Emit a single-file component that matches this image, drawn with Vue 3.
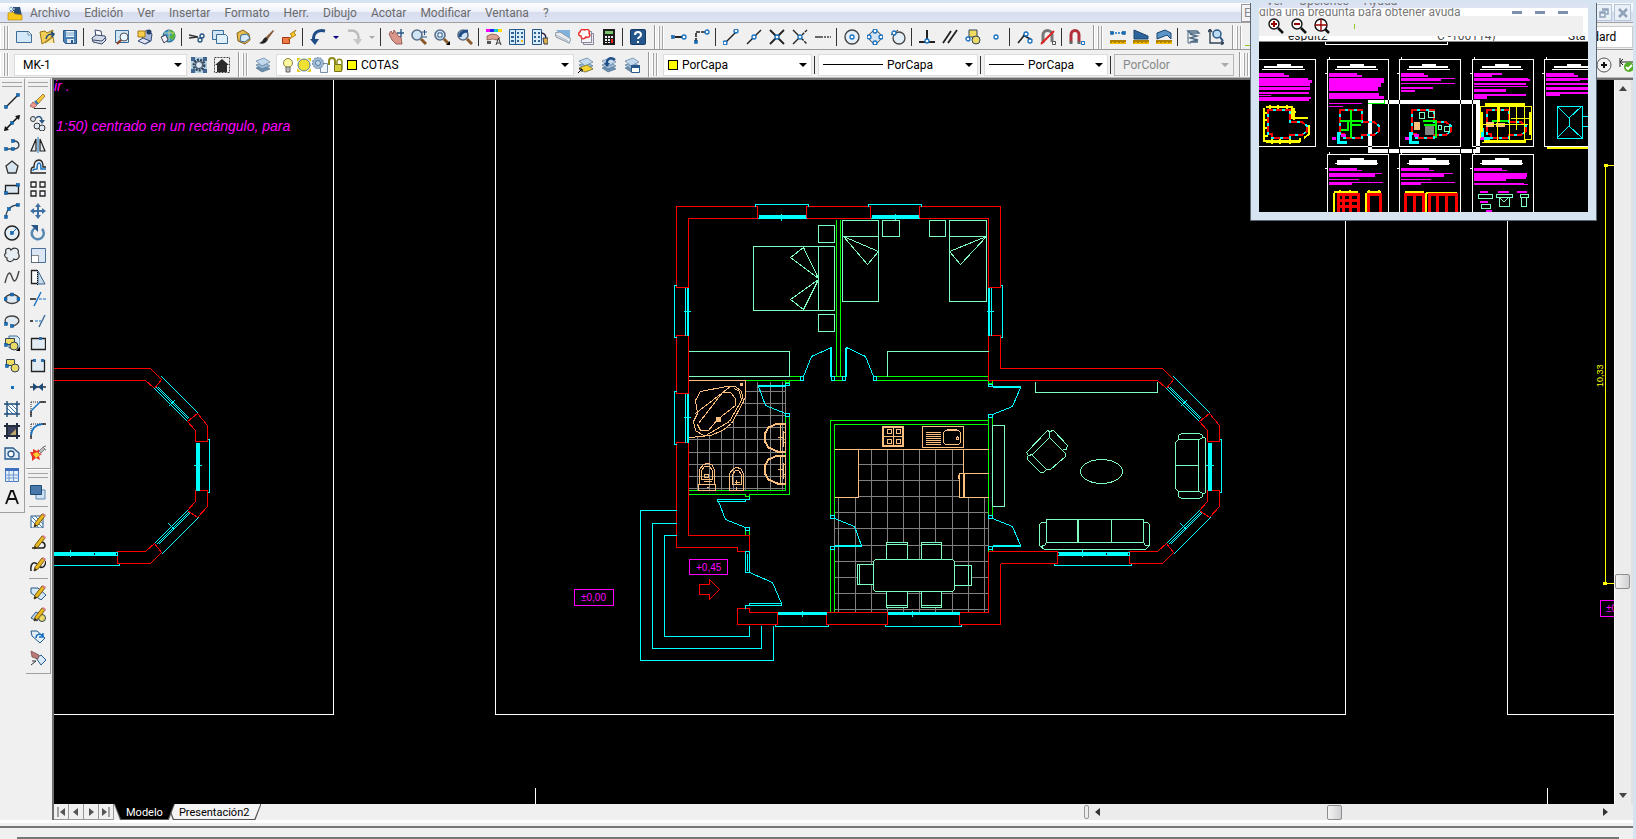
<script setup>
import { ref } from 'vue'

const menus = ['Archivo', 'Edición', 'Ver', 'Insertar', 'Formato', 'Herr.', 'Dibujo', 'Acotar', 'Modificar', 'Ventana', '?']

const pencil = '<path d="M5 11L12 2l3 2-7 9-4 2z" fill="#e8b820" stroke="#7a5a10"/><path d="M12 2l1-1 3 2-1 2z" fill="#d8808c"/><path d="M4 15l1-3 2 2z" fill="#222"/>'
const lens = '<circle cx="6" cy="6" r="5" fill="#cfe4f5" stroke="#5a6f85" stroke-width="1.6"/><path d="M10 10l5 5" stroke="#8a5a2a" stroke-width="3"/>'
const layers = '<path d="M1 11l8-3 6 4-8 3z" fill="#6d8fb0" stroke="#47698c" stroke-width=".6"/><path d="M1 8l8-3 6 4-8 3z" fill="#9cb9d6" stroke="#47698c" stroke-width=".6"/><path d="M1 4l8-3 6 4-8 4z" fill="#c3d9ee" stroke="#47698c" stroke-width=".6"/>'
const nd = (x, y) => `<rect x="${x - 1.5}" y="${y - 1.5}" width="3" height="3" fill="#1570c0" stroke="#0b4a86" stroke-width=".5"/>`
const ring = (x, y) => `<circle cx="${x}" cy="${y}" r="2" fill="#fff" stroke="#1570c0" stroke-width="1.3"/>`
const ln = (d, c = '#222', w = 1.4, e = '') => `<path d="${d}" fill="none" stroke="${c}" stroke-width="${w}" ${e}/>`
const ruler = '<path d="M0 11h16v4H0z" fill="#f0b800"/><path d="M1 11v3M3 11v2M5 11v3M7 11v2M9 11v3M11 11v2M13 11v3M15 11v2" stroke="#6d4c00" fill="none"/>'

const icons = {
  new: '<path d="M.5 2.5h12l3 3v8H.5z" fill="#d3e8f8" stroke="#3d6c96"/><path d="M12 2l4 4h-4z" fill="#fff" stroke="#3d6c96" stroke-width=".7"/>',
  open: '<path d="M1 3l5-1 2 2 6-3-2 8-9 6z" fill="#f4cf58" stroke="#9a7413"/><path d="M6 14l8-6 1 6" fill="#fbe9a0" stroke="#9a7413"/><path d="M7 10C8 5 11 5 15 5M12 3l3 2-2 3" stroke="#244e78" fill="none" stroke-width="1.6"/>',
  save: '<path d="M1.500 1.500h13v13h-11l-2-2z" fill="#4a82b8" stroke="#2a5785"/><path d="M4 2h8v6H4z" fill="#e8f3fb"/><path d="M4 4h8M4 6h8" stroke="#7fa5c8"/><path d="M5 10h7v4H5z" fill="#dde7ef"/><path d="M9 11h2v3H9z" fill="#2a5785"/>',
  print: '<path d="M4 1l6 1 1 6-6 0z" fill="#fff" stroke="#3a4a6a"/><path d="M1 9l4-3 9 1 1 4-4 4-9-2z" fill="#d5dae8" stroke="#3a4a6a"/><path d="M2 11l9 1 4-4" fill="none" stroke="#3a4a6a"/>',
  preview: '<path d="M1.500 1.500h13v12h-13z" fill="#cfe6f7" stroke="#3d6c96"/><circle cx="10" cy="8" r="4" fill="#e8f6ff" stroke="#555"/><path d="M7 11l-4 4" stroke="#8a3a1a" stroke-width="2"/>',
  publish: '<path d="M4 5l6-4 5 4-1 7-6 3z" fill="#a9bad8" stroke="#334a78"/><path d="M1 2h7v6H1z" fill="#f7cf4a" stroke="#a77812"/><circle cx="12" cy="3" r="2.500" fill="#223f66"/><path d="M1 12l5-3 7 3-5 3z" fill="#dfe4f0" stroke="#334a78"/>',
  web: '<circle cx="9" cy="7" r="6" fill="#3d9ad8" stroke="#1a5a92"/><path d="M9 2c3 2 4 4 1 5s1 3 3 4c2-2 3-6 1-8s-4-2-5-1z" fill="#5bb43c"/><path d="M9 1v11M4 4h10" stroke="#fbe28a" stroke-width=".7"/><path d="M1 8l5-2 2 5-4 3z" fill="#f0f0f6" stroke="#445"/>',
  cut: '<path d="M0 6l9 2M0 9l9-1" stroke="#333" stroke-width="1.300"/><circle cx="11" cy="11" r="2" fill="none" stroke="#2a5785" stroke-width="1.400"/><circle cx="13" cy="7" r="2" fill="none" stroke="#2a5785" stroke-width="1.400"/>',
  copy: '<path d="M.5 1.500h11v9H.5z" fill="#cfe6f7" stroke="#3d6c96"/><path d="M4.500 5.500h9l2 2v7h-11z" fill="#dff0fb" stroke="#3d6c96"/>',
  paste: '<path d="M2 4l6-3 6 4 1 6-5 4-7-3z" fill="#e8bd4c" stroke="#85621a"/><path d="M6 6l6-1 3 4-5 4-5-1z" fill="#d5e9f8" stroke="#3d6c96"/>',
  brush: '<path d="M15 1l-7 7 2 2 6-8z" fill="#8a5a3a"/><path d="M8 8c-3 1-3 5-7 6 3 2 8 0 9-4z" fill="#2a2420"/>',
  block: '<path d="M1.500 8.500h7v6h-7z" fill="#ee7a48" stroke="#a33a14"/><path d="M15 1L9 5l2 2-4 4 8-5-2-2z" fill="#f8c820" stroke="#9a6a00" stroke-width=".7"/>',
  undo: '<path d="M15 2C7 0 2 5 4 12" fill="none" stroke="#1f4d86" stroke-width="3"/><path d="M0 10l9 0-4 6z" fill="#1f4d86"/>',
  redo: '<path d="M2 2c8-2 12 3 10 10" fill="none" stroke="#bcbcbc" stroke-width="2.500"/><path d="M7 10h9l-4 6z" fill="#c6c6c6"/>',
  pan: '<path d="M1 5l2-3 2 3 1-4 3 4 1 2 3 1 1 7-6 0-4-4z" fill="#d8978a" stroke="#8a4a42" stroke-width=".8"/><path d="M13 0v8M9 4h7" stroke="#2a5785" stroke-width="1.400"/>',
  zoomrt: lens + '<path d="M11 3h5M13.500 1v5M11 8h5" stroke="#2a5785" fill="none"/>',
  zoomwin: lens + '<path d="M4 4h4v4H4z" fill="#fff" stroke="#2a5785"/><path d="M16 12v4h-4z" fill="#000"/>',
  zoomprev: lens + '<path d="M3 8c0-4 3-6 8-6" stroke="#1f4d86" stroke-width="3" fill="none"/>',
  props: '<path d="M0 0h4v3H0z" fill="#f0f"/><path d="M4 0h4v3H4z" fill="#22f"/><path d="M8 0h4v3H8z" fill="#0cc"/><path d="M12 0h4v3h-4z" fill="#fd0"/><path d="M1 7l5-2 5 1 3 3-3 2-4-1-6 1z" fill="#dba494" stroke="#7a4438" stroke-width=".7"/><path d="M1 12h4v3H1z" fill="#555"/><path d="M10 16l2.500-7 2.500 7M11 14h3" fill="none" stroke="#333"/>',
  center: '<path d="M.5.5h15v15H.5z" fill="#d9ecfa" stroke="#26588a"/><path d="M6.500 1v14" stroke="#26588a"/><path d="M2 3h3v2H2zM2 7h3v2H2zM2 11h3v2H2zM8 3h2v2H8zM12 3h2v2h-2zM8 7h2v2H8zM12 7h2v2h-2zM8 11h2v2H8z" fill="#2e6296"/><path d="M12 11h2v2h-2z" fill="#f4b400"/>',
  palette: '<path d="M.5.5h9v15h-9z" fill="#d9ecfa" stroke="#26588a"/><path d="M2 3h2v2H2zM6 3h2v2H6zM2 7h2v2H2zM6 7h2v2H6zM2 11h2v2H2zM6 11h2v2H6z" fill="#2e6296"/><path d="M9 4c4 0 5 3 5 6" stroke="#224" fill="none" stroke-width="1.400"/><path d="M11 9h5v6h-4z" fill="#dfae48" stroke="#345"/>',
  sheets: '<path d="M1 1h14v14z" fill="#7fb2dc"/><path d="M0 4l5-1 11 7-2 4L1 8z" fill="#e8ecf0" stroke="#8b98a4"/><path d="M1 6l12 6" stroke="#a5b2bd"/>',
  markup: '<path d="M5.500 4.500h10v11h-10z" fill="#e8e8f0" stroke="#889"/><path d="M3.500 2.500h10v11h-10z" fill="#f4f4f8" stroke="#889"/><path d="M2 3c1-4 4-2 5-2 3-2 5 1 4 3 2 3 0 5-3 4-2 3-5 2-5-1-3 0-3-3-1-4z" fill="#fff" stroke="#e83030" stroke-width="1.500"/>',
  calc: '<path d="M2 0h12v16H2z" fill="#1c1c1c"/><path d="M4 2h8v3H4z" fill="#79c66a"/><path d="M4 7h2v2H4zM7 7h2v2H7zM10 7h2v2h-2zM4 10h2v2H4zM7 10h2v2H7zM4 13h2v1H4zM7 13h2v1H7z" fill="#eee"/><path d="M10 10h2v4h-2z" fill="#e22"/>',
  help: '<rect x=".5" y=".5" width="15" height="15" rx="1" fill="#24568c" stroke="#153a63"/><path d="M5 6c0-4 6-4 6 0 0 2-3 2-3 4" fill="none" stroke="#fff" stroke-width="2"/><path d="M7 12h2v2H7z" fill="#fff"/>',
  s1: nd(2, 8) + ln('M4 8h7', '#222', 2) + ring(13, 8),
  s2: ln('M2 13V3h9', '#222', 1.6, 'stroke-dasharray="4 1"') + nd(2, 13) + ring(13, 3),
  s3: ln('M3 13L13 3') + ring(2, 14) + ring(13, 2),
  s4: ln('M1 15L15 1') + ring(8, 8),
  s5: ln('M1 1l14 14M15 1L1 15', '#222', 1.8) + ring(8, 8),
  s6: ln('M1 1l7 7-7 7') + ln('M15 1L8 8l7 7', '#222', 1.4, 'stroke-dasharray="3 1"') + ring(8, 8),
  s7: ln('M0 8h6', '#444', 1.6) + ln('M6 8h10', '#444', 1.6, 'stroke-dasharray="2 1"'),
  s8: '<circle cx="8" cy="8" r="7" fill="#e2eef8" stroke="#444" stroke-width="1.400"/>' + ring(8, 8),
  s9: '<circle cx="8" cy="8" r="6" fill="#d3e3f1" stroke="#444"/>' + ring(8, 2) + ring(2, 8) + ring(14, 8) + ring(8, 14),
  s10: '<circle cx="9" cy="9" r="6" fill="#e2eef8" stroke="#444" stroke-width="1.300"/><path d="M1 6l7-5" stroke="#444"/>' + ring(4, 4),
  s11: ln('M8 1v11M0 13h16', '#222', 2) + ring(8, 12),
  s12: ln('M1 14L9 2M6 14L15 1', '#222', 1.8),
  s13: '<path d="M4 1h8v7H4z" fill="#f0dc60" stroke="#345"/><circle cx="11" cy="11" r="4" fill="#eada68" stroke="#345"/>' + ring(3, 10),
  s14: ring(8, 8),
  s15: ln('M1 14L10 3M6 6l9 5', '#222', 1.6) + ring(9, 5) + ring(13, 12),
  s16: '<path d="M3 14V6c0-6 9-6 9 0v7" fill="none" stroke="#777" stroke-width="3"/><path d="M1 15L14 2" stroke="#e02020" stroke-width="2"/><path d="M12.500 12.500h3v3h-3z" fill="#fff" stroke="#555"/>',
  s17: '<path d="M2 13V6c0-6 8-6 8 0v7" fill="none" stroke="#b2303c" stroke-width="3"/><path d="M.5 12h3v3h-3zM8.500 12h3v3h-3z" fill="#666"/><path d="M12.500 12.500h3v3h-3z" fill="#fff" stroke="#1570c0"/>',
  dist: ln('M2 4h12', '#1570c0', 1.4, 'stroke-dasharray="2 1"') + nd(2, 4) + nd(14, 4) + ruler,
  area: '<path d="M1 1l14 6v3H1z" fill="#2d659a" stroke="#1b466f"/>' + ruler,
  region: '<path d="M1 10V4l8-3 6 3v6l-4-4z" fill="#5c95c8" stroke="#1b466f"/>' + ruler,
  list: '<path d="M3 2h9l2 2H5zM5 5l7 2-7 2 8 2-8 2h8" fill="none" stroke="#4e6b85" stroke-width="1.400"/><path d="M3 2v12h3" stroke="#4e6b85" fill="none"/>',
  locate: ln('M2 1v13h13M0 3l2-3 2 3M13 12l3 2-3 2', '#345') + '<circle cx="9" cy="5" r="4" fill="#bcdcf5" stroke="#2a5785" stroke-width="1.500"/><path d="M12 8l3 4" stroke="#2a5785" stroke-width="2"/>',
  gear: '<path d="M0 0h16v16H0z" fill="#b9cfe2"/><path d="M0 0h4v4H0zM12 0h4v4h-4zM0 12h4v4H0zM12 12h4v4h-4z" fill="#3f6791"/><circle cx="8" cy="8" r="5" fill="none" stroke="#31475e" stroke-width="3" stroke-dasharray="2 1"/><circle cx="8" cy="8" r="3.500" fill="#dbe7f1" stroke="#31475e"/>',
  home: '<path d="M.5.5h15v15H.5z" fill="none" stroke="#444" stroke-dasharray="2 1"/><path d="M8 2L1 8h2v7h10V8h2z" fill="#2b2b2b"/>',
  layers,
  lay1: layers + '<path d="M1 11l8-3 6 4-8 3z" fill="#f5d431" stroke="#7a6a10" stroke-width=".6"/><path d="M0 16l4-4M1 12h3v3" stroke="#000" fill="none"/>',
  lay2: layers + '<path d="M14 3C9-1 5 3 6 7" stroke="#1f4d86" stroke-width="2.500" fill="none"/><path d="M3 6h6l-3 4z" fill="#1f4d86"/>',
  lay3: layers + '<path d="M7.500 8.500h8v7h-8z" fill="#fff" stroke="#26588a"/><path d="M7 8h9v3H7z" fill="#26588a"/>',
  bulb: '<circle cx="8" cy="6" r="4.500" fill="#fdf7a0" stroke="#8c8340"/><path d="M6 10h4v5H6z" fill="#bbb" stroke="#666"/>',
  sun: '<path d="M1 1h4L1 5zM15 1h-4l4 4zM1 15h4l-4-4zM15 15h-4l4-4z" fill="#e2cd28"/><circle cx="8" cy="8" r="6" fill="#f0e030" stroke="#5a7a9a"/>',
  sunvp: '<path d="M8.500 6.500h7v9h-7z" fill="#eef4fa" stroke="#7890a8"/><circle cx="6" cy="6" r="5.500" fill="#9fb9d2" stroke="#5a7fa5" stroke-dasharray="2 1"/><circle cx="6" cy="6" r="2.500" fill="#c5d8e8" stroke="#5a7fa5"/>',
  lock: '<path d="M1 8V4c0-4 6-4 6 0v3" fill="none" stroke="#8d8a1c" stroke-width="2"/><path d="M6.500 7.500h7v7h-7z" fill="#d4ce3a" stroke="#77741a"/><path d="M9 7V4c1-3 5-2 5 1v8" fill="none" stroke="#8d8a1c" stroke-width="1.500"/>',
  line: ln('M2 14L14 2') + nd(2, 14) + nd(14, 2),
  xline: ln('M1 15L15 1', '#111', 1.6) + '<path d="M0 16l1-5 4 4zM16 0l-1 5-4-4z" fill="#111"/>' + nd(8, 8),
  pline: ln('M2 12h8c7 0 6-8 0-8', '#345', 1.4) + nd(2, 12) + nd(9, 12) + nd(9, 4),
  polygon: '<path d="M8 2l6 5-2 7H4L2 7z" fill="#d7e5f0" stroke="#333" stroke-width="1.300"/>',
  rect: '<path d="M1.500 4.500h13v8h-13z" fill="#dbe7f1" stroke="#222" stroke-width="1.300"/>' + nd(14, 4) + nd(2, 12),
  arc: ln('M2 14C2 7 7 2 14 2', '#345') + nd(2, 14) + nd(5, 6) + nd(14, 2),
  circle: '<circle cx="8" cy="8" r="7" fill="#e2edf6" stroke="#222" stroke-width="1.500"/><path d="M8 8l5-5" stroke="#1570c0"/>' + nd(8, 8),
  cloud: '<path d="M2 6C0 1 6 0 7 3c3-4 9-1 7 3 3 4-1 8-4 6-2 4-8 3-7-1-3-1-3-4-1-5z" fill="#e6edf3" stroke="#333" stroke-width="1.200"/>',
  spline: ln('M1 14C4 2 6 2 8 8s4 6 7-6', '#444'),
  ellipse: '<ellipse cx="8" cy="8" rx="7" ry="4.500" fill="#dfe9f1" stroke="#444" stroke-width="1.400"/>' + nd(1.500, 8) + nd(14.500, 8) + nd(8, 3.500),
  earc: '<path d="M3 11C-1 7 2 3 8 3s9 5 5 8-6 2-6 2" fill="#e2ebf2" stroke="#444" stroke-width="1.300"/>' + nd(2, 11) + nd(8, 13),
  insert: '<path d="M5 1h8l3 3v9H5z" fill="#dbe9f5" stroke="#3d6c96"/><path d="M1.500 3.500h9v6h-9z" fill="#f0dc60" stroke="#345"/><circle cx="10" cy="11" r="4" fill="#eada68" stroke="#345"/><path d="M16 12v4h-4z" fill="#000"/>' + nd(2, 10),
  makeblock: '<path d="M2.500 2.500h8v6h-8z" fill="#f0dc60" stroke="#345"/><circle cx="11" cy="11" r="4" fill="#eada68" stroke="#345"/>' + nd(3, 9),
  point: '<path d="M7 7h3v3H7z" fill="#1570c0"/>',
  hatch: '<path d="M3 3h10v10H3z" fill="#fff"/><path d="M3 3l10 10M3 7l6 6M7 3l6 6M11 3l2 2M3 11l2 2" stroke="#3d7ab0"/><path d="M0 3h16M0 13h16M3 0v16M13 0v16" stroke="#1d4b78" stroke-width="1.400" fill="none"/>',
  gradient: '<path d="M3 3h10v10H3z" fill="#39415f"/><path d="M5 13L13 5v8z" fill="#bba86a"/><path d="M0 3h16M0 13h16M3 0v16M13 0v16" stroke="#222c3c" stroke-width="2" fill="none"/>',
  regn: '<path d="M1 3h8l6 5v6H1z" fill="#dcebf7" stroke="#26588a" stroke-width="1.300"/><circle cx="7" cy="9" r="3" fill="#fff" stroke="#26588a" stroke-width="1.300"/>',
  table: '<path d="M1.500 1.500h13v13h-13z" fill="#e5effa" stroke="#4a79c0"/><path d="M1 1h14v3H1z" fill="#3e6fc0"/><path d="M5 4v11M9.500 4v11M1 8h14M1 11h14" stroke="#6d97d0"/>',
  erase: '<path d="M13 1l2 2-7 8-3-2z" fill="#f5c840" stroke="#8a6a20" stroke-width=".8"/><path d="M3 9l4 3-3 3-4-2z" fill="#f09a90" stroke="#8a4038" stroke-width=".7"/><path d="M5 8l3 3" stroke="#2a6fb0" stroke-width="2"/><path d="M4 15.500h12" stroke="#333"/>',
  copyobj: '<circle cx="3" cy="4" r="2.500" fill="#dce8f2" stroke="#333"/><circle cx="7" cy="11" r="3" fill="#dce8f2" stroke="#333"/><circle cx="12" cy="13" r="3" fill="#dce8f2" stroke="#333"/><path d="M6 3c3-3 6-1 6 3" fill="none" stroke="#2a5785" stroke-width="1.600"/><path d="M9 5h6l-3 4z" fill="#2a5785"/>',
  mirror: '<path d="M6 2v12H1zM10 2v12h5z" fill="#e1e9f0" stroke="#222" stroke-width="1.200"/><path d="M8 0v16" stroke="#1570c0"/>',
  offset: ln('M1 12c0-3 1-4 3-4C4 3 6 1 9 1s4 3 4 7h3M1 12v2h15', '#222', 1.3) + ln('M3 12c0-2 1-2 4-2 0-3 0-6 2-6s2 3 2 6h5', '#1570c0', 1.5),
  array: '<path d="M1 1h5v5H1zM10 1h5v5h-5zM1 10h5v5H1zM10 10h5v5h-5z" fill="#f2f6fa" stroke="#222" stroke-width="1.300"/>',
  move: '<path d="M8 0l3 4H9v3h3V5l4 3-4 3V9H9v3h2l-3 4-3-4h2V9H4v2L0 8l4-3v2h3V4H5z" fill="#3f70a4"/>',
  rotate: '<path d="M5 3a6 6 0 1 0 7 1" fill="none" stroke="#5585b0" stroke-width="2.500"/><path d="M1 0h7v7z" fill="#2a5785"/>',
  scale: '<path d="M1.500 1.500h14v14h-14z" fill="#dae7f2" stroke="#4a7098"/><path d="M1.500 8.500h7v7h-7z" fill="#fff" stroke="#222" stroke-dasharray="1 1"/>',
  stretch: '<path d="M8 2l7 13H8z" fill="#c9dbea" stroke="#3a6288"/><path d="M7 1.500H1.500v13H7" fill="#fff" stroke="#222" stroke-width="1.300"/><path d="M7.500 1v15" stroke="#000" stroke-dasharray="1 1"/>',
  trim: ln('M0 8h6', '#222', 1.6) + ln('M9 8h7', '#1570c0', 1.2, 'stroke-dasharray="3 1"') + ln('M4 15L11 1', '#1570c0', 1.4),
  extend: ln('M0 8h3', '#222', 1.6) + ln('M5 8h6', '#1570c0', 1.2, 'stroke-dasharray="3 1"') + ln('M9 14L15 2', '#3d6c96', 1.4),
  breakpt: '<path d="M1.500 3.500h14v11h-14z" fill="#e2ebf3" stroke="#222" stroke-width="1.300"/><path d="M9 2h3v3H9z" fill="#2a6fb0"/>',
  brk: '<path d="M3 3.500H1.500v11h13v-11H13" fill="#e2ebf3" stroke="#222" stroke-width="1.300"/><path d="M3 2h3v3H3zM11 2h3v3h-3z" fill="#2a6fb0"/>',
  join: '<path d="M0 8h16" stroke="#222" stroke-width="1.400"/><path d="M3 4l5 4-5 4zM13 4L8 8l5 4z" fill="#1d4b78"/>',
  chamfer: ln('M1 1h14M1 1v14', '#222', 1, 'stroke-dasharray="1 1"') + ln('M1 16V10M10 1h6', '#222', 1.4) + ln('M1 10l9-9', '#1570c0', 1.5),
  fillet: ln('M1 1h14M1 1v14', '#222', 1, 'stroke-dasharray="1 1"') + ln('M1 16V12M12 1h4', '#222', 1.4) + ln('M1 12C2 5 5 2 12 1', '#1570c0', 1.8),
  explode: '<path d="M0 7h3V4l4 2 2-2v4l3 1-3 2 1 4-4-2-4 3v-4z" fill="#e8352a"/><path d="M3 9l4-2 3 3-4 3z" fill="#f8d030"/><path d="M9 6l4-4 2 2-4 4z" fill="#bbb" stroke="#555" stroke-width=".6"/><path d="M13 2l3-1M14 4l2 1" stroke="#777"/>',
  draworder: '<path d="M6 6h9v9H6z" fill="#cfe1f2" stroke="#5b87b4"/><path d="M.5 1.500h11v9H.5z" fill="#4a78a8" stroke="#1d4b78"/>',
  edhatch: '<path d="M1 4h12v12H1z" fill="#fff" stroke="#26588a"/><path d="M1 8l8 8M1 4l12 12M5 4l8 8" stroke="#3d7ab0"/>' + pencil,
  edpline: '<path d="M2 14h10c4 0 4-5 0-6" fill="none" stroke="#222" stroke-width="1.500"/>' + pencil,
  edspline: '<path d="M1 15C0 6 5 5 8 9s7 3 8-4" fill="none" stroke="#222" stroke-width="1.500"/>' + pencil,
  edattr: '<path d="M1 4h7l8 7-5 5-10-7z" fill="#d6e7f5" stroke="#26588a"/>' + pencil,
  edblock: '<path d="M1 12l5-6 6 3-5 6z" fill="#c5daec" stroke="#26588a"/><circle cx="12" cy="12" r="3.500" fill="#eada68" stroke="#345"/>' + pencil,
  attsync: '<path d="M1 3h6l8 7-5 5-8-7z" fill="#e2eef8" stroke="#26588a"/><path d="M6 10c0-4 4-5 7-2M13 5v4H9" stroke="#1570c0" fill="none" stroke-width="1.500"/>',
  attext: '<path d="M6 8l5-3 5 5-5 5z" fill="#d6e7f5" stroke="#26588a"/><path d="M1 1l8 4-1 4-6-2z" fill="#b97a78" stroke="#75403e" stroke-width=".7"/><path d="M1 15l5-4M2 11h4" stroke="#333"/>',
  text: '<path d="M2 15L7 2h2l5 13M4 10h8" fill="none" stroke="#111" stroke-width="1.900"/>'
}

const standardBar = [['new', 'open', 'save'], ['print', 'preview', 'publish', 'web'], ['cut', 'copy', 'paste', 'brush', 'block'], ['undo', '▾', 'redo', '▿'], ['pan', 'zoomrt', 'zoomwin', 'zoomprev'], ['props', 'center', 'palette', 'sheets', 'markup', 'calc'], ['help']]
const snapBar = [['s1', 's2'], ['s3', 's4', 's5', 's6', 's7'], ['s8', 's9', 's10'], ['s11', 's12', 's13', 's14'], ['s15', 's16'], ['s17']]
const queryBar = [['dist', 'area', 'region'], ['list', 'locate']]
const topBars = [standardBar, snapBar, queryBar]
const drawBar = ['line', 'xline', 'pline', 'polygon', 'rect', 'arc', 'circle', 'cloud', 'spline', 'ellipse', 'earc', 'insert', 'makeblock', 'point', 'hatch', 'gradient', 'regn', 'table', 'text']
const modifyBar = ['erase', 'copyobj', 'mirror', 'offset', 'array', 'move', 'rotate', 'scale', 'stretch', 'trim', 'extend', 'breakpt', 'brk', 'join', 'chamfer', 'fillet', 'explode']
const editBars = [['draworder'], ['edhatch', 'edpline', 'edspline'], ['edattr', 'edblock', 'attsync', 'attext']]

const workspace = ref('MK-1')
const layer = ref('COTAS')
const tab = ref('Modelo')

const bathX = [697, 709, 721, 733, 745, 757, 770, 782]
const bathY = [391, 403, 415, 427, 439, 452, 464, 476, 488]
const kitX = [871, 887, 903, 919, 935, 952]
const kitY = [512, 528, 545, 561, 577, 593, 609]

/* sheet cards of the overview: left edge, row, note bars as [y, height, length] */
const sheets = [
  { x: 1254, row: 1, n: [[73, 2, 28], [75, 2, 33], [78, 2, 52], [80, 3, 56], [83, 3, 54], [87, 3, 54], [92, 2, 53], [95, 1, 15], [97, 2, 55], [99, 2, 53]] },
  { x: 1327, row: 1, n: [[73, 2, 28], [75, 2, 33], [78, 5, 55], [83, 4, 52], [87, 4, 49], [93, 3, 50], [96, 3, 55], [103, 1, 33], [106, 1, 14]] },
  { x: 1399, row: 1, n: [[73, 2, 23], [75, 2, 27], [78, 1, 54], [79, 2, 40], [83, 1, 54], [87, 2, 32], [90, 2, 14]] },
  { x: 1472, row: 1, n: [[73, 2, 28], [75, 2, 18], [78, 1, 54], [79, 2, 56], [83, 2, 52], [86, 1, 54], [89, 3, 32], [94, 2, 52], [96, 3, 13]] },
  { x: 1544, row: 1, n: [[73, 2, 28], [75, 2, 32], [78, 2, 60], [80, 1, 34], [83, 2, 60], [87, 3, 60], [92, 2, 60], [94, 2, 14]] },
  { x: 1327, row: 2, n: [[168, 2, 28], [170, 1, 33], [173, 1, 53], [174, 3, 46], [179, 1, 30], [182, 1, 54], [183, 2, 23]] },
  { x: 1399, row: 2, n: [[168, 2, 28], [170, 1, 33], [173, 1, 52], [174, 3, 43], [179, 1, 30], [182, 1, 54], [183, 2, 20]] },
  { x: 1472, row: 2, n: [[168, 2, 28], [170, 1, 33], [173, 4, 53], [177, 2, 52], [179, 2, 32], [183, 2, 50], [184, 1, 54]] }
]
</script>

<template>
  <div class="app">
    <header class="menubar">
      <svg class="logo" width="16" height="16" viewBox="0 0 16 16"><path d="M2 2h11l2 9H4z" fill="#2c4e74"/><path d="M1 8l5-1 2 2 7 1v5H1z" fill="#f6c81c" stroke="#b98a08" stroke-width=".7"/><path d="M0 4h8M4 0v8M1 1l6 6M7 1L1 7" stroke="#dff1ff"/></svg>
      <nav>
        <button v-for="m in menus" :key="m" type="button">{{ m }}</button>
      </nav>
      <input class="ask" type="text" aria-label="Pregunta" value="Escriba una pregunta" />
      <button class="win" type="button" aria-label="Restaurar"><svg width="10" height="10" viewBox="0 0 10 10"><path d="M3 1h6v5H7M1 4h5v5H1zM1 5h5M3 2h6" fill="none" stroke="#8fa2b8" stroke-width="1.500"/></svg></button>
      <button class="win" type="button" aria-label="Cerrar"><svg width="10" height="10" viewBox="0 0 10 10"><path d="M1 1l8 8M9 1L1 9" stroke="#8fa2b8" stroke-width="2.500"/></svg></button>
    </header>

    <div class="toolrow first">
      <div v-for="(bar, b) in topBars" :key="b" class="bar">
        <i class="grip"></i>
        <template v-for="(group, g) in bar" :key="g">
          <i v-if="g" class="sep"></i>
          <template v-for="n in group" :key="n">
            <button v-if="n === '▾' || n === '▿'" class="drop" :class="{ off: n === '▿' }" type="button" aria-label="Historial"></button>
            <button v-else class="tool" type="button" :aria-label="n"><svg width="16" height="16" viewBox="0 0 16 16" v-html="icons[n]"></svg></button>
          </template>
        </template>
      </div>
      <div class="bar rest">
        <i class="grip"></i>
        <i class="greenline"></i>
        <select class="style" aria-label="Estilo"><option>Standard</option></select>
      </div>
    </div>

    <div class="toolrow">
      <div class="bar">
        <i class="grip"></i>
        <div class="combo c1"><select v-model="workspace" aria-label="Espacio de trabajo"><option>MK-1</option></select><i class="arrow"></i></div>
        <button v-for="n in ['gear', 'home']" :key="n" class="tool" type="button" :aria-label="n"><svg width="16" height="16" viewBox="0 0 16 16" v-html="icons[n]"></svg></button>
      </div>
      <div class="bar">
        <i class="grip"></i>
        <button class="tool" type="button" aria-label="Capas"><svg width="16" height="16" viewBox="0 0 16 16" v-html="icons.layers"></svg></button>
        <div class="combo c2">
          <svg v-for="n in ['bulb', 'sun', 'sunvp', 'lock']" :key="n" width="16" height="16" viewBox="0 0 16 16" v-html="icons[n]"></svg>
          <i class="swatch"></i>
          <select v-model="layer" aria-label="Capa"><option>COTAS</option></select><i class="arrow"></i>
        </div>
        <button v-for="n in ['lay1', 'lay2', 'lay3']" :key="n" class="tool" type="button" :aria-label="n"><svg width="16" height="16" viewBox="0 0 16 16" v-html="icons[n]"></svg></button>
      </div>
      <div class="bar">
        <i class="grip"></i>
        <div class="combo c3"><i class="swatch"></i><select aria-label="Color"><option>PorCapa</option></select><i class="arrow"></i></div>
        <i class="sep"></i>
        <div class="combo c4"><i class="rule long"></i><select aria-label="Tipo de línea"><option>PorCapa</option></select><i class="arrow"></i></div>
        <i class="sep"></i>
        <div class="combo c5"><i class="rule"></i><select aria-label="Grosor de línea"><option>PorCapa</option></select><i class="arrow"></i></div>
        <i class="sep"></i>
        <div class="combo c6 disabled"><select disabled aria-label="Estilo de trazado"><option>PorColor</option></select><i class="arrow"></i></div>
      </div>
      <div class="bar rest">
        <i class="grip"></i>
        <button class="end" type="button" aria-label="Centro"><svg width="18" height="18" viewBox="0 0 18 18"><circle cx="9" cy="9" r="7" fill="#f4f4f4" stroke="#555"/><path d="M6 9h6M9 6v6" stroke="#111" stroke-width="2"/></svg></button>
        <button class="end last" type="button" aria-label="Inspección"><svg width="16" height="16" viewBox="0 0 16 16"><path d="M1 1v9M1 5h14M4 2L1 5l3 3" stroke="#222" fill="none"/><circle cx="10" cy="10" r="5" fill="#4fae22"/><path d="M7 10l2 2 4-4" stroke="#fff" stroke-width="2" fill="none"/></svg></button>
      </div>
    </div>

    <main>
      <div class="dock">
        <div class="col">
          <div class="vbar">
            <i class="hgrip"></i>
            <button v-for="n in drawBar" :key="n" class="vtool" type="button" :aria-label="n"><svg width="16" height="16" viewBox="0 0 16 16" v-html="icons[n]"></svg></button>
          </div>
        </div>
        <div class="col">
          <div class="vbar">
            <i class="hgrip"></i>
            <button v-for="n in modifyBar" :key="n" class="vtool" type="button" :aria-label="n"><svg width="16" height="16" viewBox="0 0 16 16" v-html="icons[n]"></svg></button>
          </div>
          <div class="vbar">
            <i class="hgrip"></i>
            <template v-for="(g, k) in editBars" :key="k">
              <i v-if="k" class="hsep"></i>
              <button v-for="n in g" :key="n" class="vtool" type="button" :aria-label="n"><svg width="16" height="16" viewBox="0 0 16 16" v-html="icons[n]"></svg></button>
            </template>
          </div>
        </div>
      </div>

      <section class="doc">
        <div class="view">
          <svg class="drawing" shape-rendering="crispEdges">
            <g transform="translate(-53.500 -79.500)" fill="none" stroke-width="1">
              <!-- sheet frames -->
              <path stroke="#fff" d="M333 70V714H40M495 70V714H1345V70M1507 70V714H1640M535 787V810M1547 787V810"/>

              <!-- floor tiles -->
              <g stroke="#808080">
                <path v-for="x in bathX" :key="'a' + x" :d="`M${x} 381V490`"/>
                <path v-for="y in bathY" :key="'b' + y" :d="`M688 ${y}H785`"/>
                <path d="M785 386V416"/>
                <path v-for="x in kitX" :key="'c' + x" :d="`M${x} 449V612`"/>
                <path d="M838 497V612M855 497V612M968 497V612M984 497V612M988 497V612M858 464H963M858 480H959M858 496H959M834 497V612"/>
                <path v-for="y in kitY" :key="'d' + y" :d="`M834 ${y}H988`"/>
              </g>
              <path d="M688 380H745V396L743 401L731 423L722 430L710 435L689 437Z" fill="#000"/>

              <!-- partitions -->
              <path stroke="#0f0" d="M836 219V376M840 219V376M789 376H800M745 380H800M834 376H842M834 380H842M988 376H876V380H988M785 380V382H789V380M785 416V490H688M789 416V494H749V496H745V494H688M789 416H785M988 420H830V515H834V424H988M834 549V612M830 612V549H834M988 380V383H992V380M988 417H992V515H988ZM988 549H992V551M988 549V551M745 530H749V535H745Z"/>

              <!-- walls -->
              <path stroke="#f00" d="M676 287V206H757V218H688V287ZM806 206H870V218H806ZM919 206H1000V287H988V218H919ZM676 335H688V393H676ZM1000 368V335H988V380M688 442H676V547H737V551H749V535H688ZM737 608H749V612H777V624H737ZM826 612H887V624H826ZM1000 563V624H959V612H988V551M699 584H709V579L719 589L709 599V594H699Z"/>

              <!-- windows, doors and steps -->
              <g stroke="#0ff">
                <path d="M755 206V204H808V206M868 206V204H921V206M757 218H806M870 218H919M781 213V220M895 213V220"/>
                <path d="M758 216H805M871 216H918" stroke-width="4"/>
                <path d="M676 285H674V337H676M676 391H674V444H676M1000 285H1002V337H1000M685 287V335M687 287V335M688 287V335M685 393V442M687 393V442M688 393V442M988 287V335M989 287V335M991 287V335M683 311H690M683 417H690M986 311H993"/>
                <path d="M775 624V626H828V624M885 624V626H961V624M802 610V616M912 610V616"/>
                <path d="M777 613H826M887 613H959" stroke-width="3"/>
                <path d="M676 510H640V660H773V625M676 523H652V648H761V625M676 535H664V636H749V625"/>
                <path d="M800 376H803V380H800ZM831 376H834V380H831ZM842 376H845V380H842ZM873 376H876V380H873ZM785 383H789V385H785ZM785 413H789V416H785ZM988 384H992V386H988ZM988 414H992V417H988ZM988 515H992V518H988ZM988 546H992V549H988ZM830 515H834V518H830ZM830 546H834V549H830ZM745 527H749V530H745Z"/>
                <path d="M830 376V347M831 376V347L811 356L803 376M845 376V347M846 376V347L865 356L873 376M785 385H757M785 386H758L765 405L785 413"/>
                <path d="M992 386H1020M992 387H1020L1012 406L992 414M992 546H1020M992 545H1020L1012 526L992 518M834 546H861M834 545H861L854 526L834 518"/>
                <path d="M749 496V499H717V501H745V499M718 501L725 519L745 527M745 551H749V572H745ZM747 553V570M749 572L772 582L781 603V605H745V608M781 603H749V605"/>
              </g>

              <!-- bay window end, shared by both sheets -->
              <g v-for="dx in [0, -1012]" :key="dx" :transform="`translate(${dx} 0)`">
                <path stroke="#f00" d="M1000 368H1162L1173 379L1166 388L1157 380H988M1199 421L1209 413L1219 425V441H1207V430ZM1207 490H1219V506L1209 517L1199 510L1207 501ZM1000 563H1057V551H988M1166 543L1173 552L1162 563H1129V551H1157Z"/>
                <path stroke="#0ff" d="M1173 376L1210 413M1210 517L1173 554M1219 439H1221V492H1219M1054 563V565H1131V563M1166 388L1199 421M1168 387L1200 419M1170 387L1201 418M1199 510L1166 543M1200 512L1168 544M1201 513L1170 544M1180 406L1186 400M1180 523L1186 529M1205 465H1213M1082 549V556"/>
                <path stroke="#0ff" stroke-width="4" d="M1209 442V490M1057 553H1129"/>
                <path stroke="#000" d="M1058 552V554M1106 552V554M1128 552V554"/>
              </g>

              <!-- furniture -->
              <g stroke="#7fffbf">
                <path d="M688 351H789V376H688M988 351H887V376M753 246H834V310H753ZM818 246V310M818 225H834V242H818ZM818 314H834V331H818ZM803 247L790 257L818 278ZM818 279L790 299L803 309Z"/>
                <path d="M842 220H878V301H842ZM842 236H878M843 236L878 251L867 264ZM949 220H986V301H949ZM949 236H986M986 236L949 251L960 264ZM882 220H899V236H882ZM929 220H945V236H929Z"/>
                <path d="M992 425H1004V506H992ZM1035 381V392H1157V381"/>
                <ellipse cx="1101" cy="471" rx="21" ry="12"/>
                <path d="M1046 519H1143V542H1046ZM1078 519V542M1077 519V542M1111 519V542M1046 522H1041L1039 524V545L1044 549H1145L1149 545V524L1147 522H1143M1046 542L1044 545L1040 546M1143 542L1145 545L1149 545"/>
                <path d="M1175 442L1178 439H1198V491H1178L1175 488ZM1175 465H1198M1178 439V435L1181 433H1199L1202 435V437L1199 439H1198M1202 436L1205 438V492L1202 494M1178 491V496L1181 498H1199L1202 496V493L1199 491H1198"/>
                <path d="M1047 430L1026 452L1028 455L1032 454L1049 437V431ZM1049 431L1053 430L1067 445L1066 449L1062 449M1049 437L1065 453V456L1050 469H1046L1032 455M1027 455V459L1040 472H1043L1046 469"/>
                <g fill="#000">
                  <path d="M886 542H907V559H886ZM921 542H941V559H921ZM886 591H907V607H886ZM921 591H941V607H921ZM857 564H873V584H857ZM954 565H971V585H954Z"/>
                  <path d="M875 559H952L954 561V589L952 591H875L873 589V561Z"/>
                </g>
                <path d="M886 544H907M921 544H941M886 605H907M921 605H941M859 564V584M968 565V585"/>
              </g>

              <!-- sanitary ware and kitchen units -->
              <g stroke="#ffbf7f">
                <path d="M688 380H745V396L743 401L731 423L722 430L710 435L689 437M743 401L741 391L735 386L726 386L700 391L695 400L697 413L693 421L695 430L703 435L710 435M695 413L730 386M698 423L722 392H730L735 398V405L717 419L708 430H700L697 424M707 434L729 421L741 400L739 391L734 388"/>
                <path d="M716 417H719V420H716ZM740 383H741V384H740ZM717 418V420" stroke-width="2"/>
                <g v-for="dy in [0, 32]" :key="dy" :transform="`translate(0 ${dy})`">
                  <path d="M785 423H777L768 427L764 434V440L768 447L777 451H785" stroke-width="2"/>
                  <path d="M780 423V451M783 430V446M777 437H783M782 432H785M782 442H785M785 423V451"/>
                </g>
                <path d="M698 484H715V490H698ZM699 484V469L703 464L707 463L711 464L714 469V484M701 479V470L704 466H709L712 470V479ZM704 474H708V477H704ZM703 481H711M706 487H708"/>
                <path d="M729 490V473L733 468L736 467L740 468L743 473V490ZM732 484V474L735 470H738L741 474V484ZM734 482H739M736 479V483M736 486V489"/>
                <path d="M834 449H988M858 449V497H834M963 449V473H988M959 473H964V497H959ZM963 473V497M964 497H988M958 474V478"/>
                <path d="M882 426H903V446H882ZM883 427H902V445H883ZM893 427V445M883 436H902"/>
                <path d="M887 429H891V433H887ZM896 429H900V433H896ZM887 439H891V443H887ZM896 439H900V443H896Z"/>
                <path d="M922 426H963V447H922ZM925 432H940M925 434H940M925 436H940M925 438H940M925 440H940M925 442H940M925 444H940M945 430H958L960 432V442L958 444H945L943 442V432ZM946 429H956M956 437H958V439H956ZM957 435V437"/>
              </g>

              <!-- levels and dimension -->
              <path stroke="#f0f" d="M689 559H727V574H689ZM574 589H613V605H574ZM1620 600H1600V616H1620"/>
              <path stroke="#ff0" d="M1605 165V583M1603 165H1620M1603 583H1620"/>
              <path stroke="#ff0" stroke-width="3" d="M1603 165H1607M1602 583H1606"/>
            </g>
            <g transform="translate(-54 -80)">
              <text class="level" x="696" y="571">+0,45</text>
              <text class="level" x="581" y="601">±0,00</text>
              <text class="level" x="1606" y="612">±0,00</text>
              <text class="dim" x="0" y="0" transform="translate(1603 387) rotate(-90)">10,33</text>
              <text class="note" x="54" y="91">ir  .</text>
              <text class="note" x="56" y="131">1:50) centrado en un rectángulo, para</text>
            </g>
          </svg>
          <div class="vscroll">
            <button type="button" aria-label="Subir"><svg width="8" height="5"><path d="M0 5l4-5 4 5z" fill="#444"/></svg></button>
            <span class="track"><i class="thumb"></i></span>
            <button type="button" aria-label="Bajar"><svg width="8" height="5"><path d="M0 0h8L4 5z" fill="#444"/></svg></button>
          </div>
        </div>
        <div class="tabs">
          <button class="nav" type="button" aria-label="Primera"><svg width="10" height="10"><path d="M2 0v10" stroke="#555"/><path d="M9 1v8L4 5z" fill="#555"/></svg></button>
          <button class="nav" type="button" aria-label="Anterior"><svg width="10" height="10"><path d="M7 1v8L2 5z" fill="#555"/></svg></button>
          <button class="nav" type="button" aria-label="Siguiente"><svg width="10" height="10"><path d="M3 1v8l5-4z" fill="#555"/></svg></button>
          <button class="nav" type="button" aria-label="Última"><svg width="10" height="10"><path d="M8 0v10" stroke="#555"/><path d="M1 1v8l5-4z" fill="#555"/></svg></button>
          <button class="tab" :class="{ on: tab === 'Modelo' }" type="button" @click="tab = 'Modelo'"><span>Modelo</span></button>
          <button class="tab" :class="{ on: tab === 'Presentación2' }" type="button" @click="tab = 'Presentación2'"><span>Presentación2</span></button>
          <div class="hscroll">
            <i class="split"></i>
            <button type="button" aria-label="Izquierda"><svg width="5" height="8"><path d="M5 0v8L0 4z" fill="#333"/></svg></button>
            <span class="htrack"><i class="thumb"></i></span>
            <button type="button" aria-label="Derecha"><svg width="5" height="8"><path d="M0 0v8l5-4z" fill="#333"/></svg></button>
          </div>
        </div>
      </section>
    </main>
    <footer><i></i></footer>

    <aside class="aerial">
      <div class="inner">
        <div class="amenu"><button type="button">Ver</button><button type="button">Opciones</button><button type="button">Ayuda</button></div>
        <div class="ghost top"><span>giba una pregunta para obtener ayuda</span><b></b><b></b><b></b></div>
        <div class="atools">
          <button type="button" aria-label="Ampliar"><svg width="16" height="16" viewBox="0 0 16 16"><circle cx="6" cy="6" r="5" fill="#fff" stroke="#111" stroke-width="1.400"/><path d="M10 10l5 5" stroke="#111" stroke-width="2.500"/><path d="M3 6h6M6 3v6" stroke="#900" stroke-width="2"/></svg></button>
          <button type="button" aria-label="Reducir"><svg width="16" height="16" viewBox="0 0 16 16"><circle cx="6" cy="6" r="5" fill="#fff" stroke="#111" stroke-width="1.400"/><path d="M10 10l5 5" stroke="#111" stroke-width="2.500"/><path d="M3 6h6" stroke="#900" stroke-width="2"/></svg></button>
          <button type="button" aria-label="Global"><svg width="16" height="16" viewBox="0 0 16 16"><circle cx="7" cy="7" r="6" fill="#fff" stroke="#111" stroke-width="1.400"/><path d="M11 11l4 4" stroke="#111" stroke-width="2.500"/><path d="M1 7h12M7 1v12" stroke="#900" stroke-width="1.400"/></svg></button>
          <i></i>
        </div>
        <div class="ghost low"><span class="w1">espuit2</span><span class="w2">C -100114)</span><span class="w3">Sta</span></div>
        <svg class="overview" shape-rendering="crispEdges">
          <g transform="translate(-1259 -42)">
            <path d="M1325 40V44H1447V40" transform="translate(.5 .5)" fill="none" stroke="#fff"/>
            <g v-for="(s, i) in sheets" :key="i">
              <rect :x="s.x + 0.5" :y="s.row === 1 ? 59.5 : 154.5" width="61" :height="s.row === 1 ? 87 : 90" fill="none" stroke="#fff"/>
              <path v-if="s.row === 1" :d="`M${s.x + 23} 64h14v2h12v2h-39v-2h13zM${s.x + 8} 69h43v1h-43zM${s.x + 2} 57h1v2h-1zM${s.x - 2} 73h2v1h-2z`" fill="#fff"/>
              <path v-else :d="`M${s.x + 23} 158h14v2h13v5h-40v-5h13zM${s.x + 8} 163h43v1h-43zM${s.x + 2} 152h1v2h-1zM${s.x - 2} 168h2v1h-2z`" fill="#fff"/>
              <rect v-for="(b, k) in s.n" :key="k" :x="s.x + 2" :y="b[0]" :width="b[2]" :height="b[1]" fill="#f0f"/>
            </g>
            <path d="M1368 100h112v53h-112zM1372 104v45h104v-45z" fill="#fff" fill-rule="evenodd"/>
            <path d="M1388 100h1v4h-1zM1399 100h1v4h-1zM1460 100h1v4h-1zM1472 100h1v4h-1zM1388 149h1v4h-1zM1399 149h1v4h-1zM1460 149h1v4h-1zM1472 149h1v4h-1zM1368 146h4v1h-4zM1476 146h4v1h-4z" fill="#000"/>
            <path d="M1368 103h16v-3" fill="none" stroke="#0f0"/>
            <!-- plans -->
            <g fill="none" stroke-width="1">
              <path d="M1264 108V141H1300V138M1266 107H1292V118H1308M1266 142H1300M1309 125V134L1304 138M1263 113H1268M1263 120H1268M1263 128H1268M1263 136H1268M1270 105V110M1278 105V110M1287 105V110M1272 139V144M1280 139V144M1290 139V144M1292 112H1296M1294 108V120" stroke="#ff0" stroke-width="2"/>
              <path v-for="x in [1268, 1340, 1412, 1487]" :key="x" :d="`M${x} 110H${x + 22}V122H${x + 34}L${x + 39} 126V131L${x + 34} 135H${x + 22}V138H${x + 4}V134H${x}Z`" stroke="#f00" stroke-width="2"/>
              <path v-for="x in [1268, 1340, 1412, 1487]" :key="'w' + x" :d="`M${x} 110H${x + 22}V122H${x + 34}L${x + 39} 126V131L${x + 34} 135H${x + 22}V138H${x + 4}V134H${x}Z`" stroke="#0ff" stroke-width="2" stroke-dasharray="3 6" stroke-dashoffset="4"/>
              <path d="M1351 110V138M1340 121H1362M1352 125H1361M1341 130H1348V122M1423 121H1436V138M1424 125H1435M1492 121H1508" stroke="#0f0" stroke-width="2"/>
              <path d="M1338 132V142H1347M1410 132V142H1419M1482 128V138H1490" stroke="#0ff" stroke-width="3"/>
              <path d="M1332 138h4M1341 135h5M1405 138h4M1414 135h5M1480 138h4" stroke="#f0f" stroke-width="3"/>
              <path d="M1414 122h6v8h-6zM1486 122h8v5h-8zM1496 123h9v4h-9z" fill="#ffbf7f"/>
              <path d="M1425 126h9v9h-9z" fill="#808080"/>
              <path d="M1419 112h5v6h-5zM1428 111h6v6h-6zM1438 125h3v4h-3zM1444 126h5v5h-5z" stroke="#7fffbf"/>
              <path d="M1480 106H1531V139H1524M1480 106V138M1482 142H1525M1486 103H1524V142M1497 103V140M1509 103V142M1483 124H1528M1511 118H1530M1516 103V130" stroke="#ff0"/>
              <path d="M1485 104H1525M1484 141H1526M1530 112V135M1481 112V132M1498 106V122" stroke="#ff0" stroke-width="3"/>
              <path d="M1557 106H1582V138H1557ZM1557 106L1569 118L1582 106M1557 138L1569 126L1582 138M1569 118V126M1582 116H1590M1582 126H1590" stroke="#0ff"/>
              <path d="M1547 148H1590" stroke="#ff0" stroke-width="2"/>
              <path d="M1334 192H1358M1367 192H1381M1334 193V212M1366 193V212M1405 192H1424M1426 193H1457M1426 193V212M1340 190V194M1350 190V194M1369 190V194M1379 190V194" stroke="#ff0" stroke-width="2"/>
              <path d="M1338 194h20v20h-20zM1343 195v18M1350 195v18M1338 200h20M1338 206h20M1368 194h12v20h-12zM1405 194h18v20h-18zM1414 194v20M1429 194h27v20h-27zM1437 194v20M1446 194v20" stroke="#f00" stroke-width="3"/>
              <path d="M1480 192h8M1498 192h11M1517 192h10M1480 202h8M1486 211h6" stroke="#f0f" stroke-width="2"/>
              <path d="M1478 194h14v4h-14zM1481 204h9v4h-9zM1496 194h16v3h-16zM1499 197h10v9h-10zM1500 198l4 4 4-4M1520 194h8v3h-8zM1521 197h5v9h-5z" stroke="#7fffbf"/>
            </g>
          </g>
        </svg>
      </div>
    </aside>
  </div>
</template>

<style>
html, body { background: #f0f0f0; }
</style>

<style scoped>
.app {
  position: relative;
  box-sizing: border-box;
  min-height: 100vh;
  display: flex;
  flex-direction: column;
  border-top: 3px solid #d6e3f0;
  border-right: 3px solid #d6e3f0;
  background: #f0f0f0;
  font: 12px Roboto, "Open Sans", sans-serif;
  color: #000;
  overflow: hidden;
}
button { margin: 0; padding: 0; border: 0; background: none; font: inherit; color: inherit; }
i { display: block; flex: none; }
svg { display: block; flex: none; }

.menubar {
  height: 20px;
  flex: none;
  display: flex;
  align-items: center;
  box-sizing: border-box;
  padding: 0 2px 0 7px;
  gap: 2px;
  background: linear-gradient(#fff 0, #eef1fa 45%, #d8deef 50%, #dde3f3 100%);
  border-bottom: 1px solid #a0a0a0;
}
.menubar nav { display: flex; flex: 1; }
.menubar nav button { padding: 0 7px; line-height: 18px; color: #6c6c6c; white-space: nowrap; }
.menubar nav button:first-child { padding-left: 5px; }
.ask { width: 352px; height: 18px; box-sizing: border-box; border: 1px solid #999; background: #f4f4f8; font: inherit; color: #888; padding: 0 2px; }
.win { width: 17px; height: 17px; display: flex; align-items: center; justify-content: center; border: 1px solid #b5c4d8; background: #eaf0f8; box-sizing: border-box; }

.toolrow { display: flex; box-sizing: border-box; height: 28px; padding-top: 2px; border-bottom: 1px solid #b8b8b8; flex: none; }
.toolrow.first { height: 27px; border-bottom-color: #999; }
.bar { display: flex; align-items: center; border-right: 1px solid #999; border-left: 1px solid #fff; padding-right: 5px; }
.bar.rest { flex: 1; border-right: 0; padding-right: 0; }
.grip { width: 2px; height: 23px; border: 1px solid #a5a5a5; border-width: 0 1px; margin: 0 4px 0 3px; box-shadow: 1px 0 #fff, -1px 0 #fff; }
.tool { width: 23px; height: 23px; display: flex; align-items: center; justify-content: center; flex: none; }
.sep { width: 1px; height: 18px; background: #333; margin: 0 3px 0 2px; }
.drop { width: 13px; height: 20px; display: flex; align-items: center; justify-content: center; }
.drop::after { content: ""; border: 3px solid transparent; border-top-color: #000080; border-bottom: 0; }
.drop.off::after { border-top-color: #aaa; }
.greenline { width: 12px; height: 1px; background: #8cc820; align-self: flex-end; margin-bottom: 3px; }
.style { margin-left: auto; box-sizing: border-box; width: 100px; height: 22px; border: 1px solid #ccc; background: #fff; appearance: none; font: inherit; padding: 0 0 0 34px; }
.end { width: 34px; flex: none; display: flex; justify-content: center; }
.end.last { width: 12px; }
.grip + .end { margin-left: auto; }

.combo { display: flex; align-items: center; height: 22px; box-sizing: border-box; border: 1px solid #dcdcdc; background: #fff; padding: 0 4px; }
.combo select { flex: 1; min-width: 0; appearance: none; border: 0; background: none; font: inherit; color: inherit; padding: 0 4px; height: 20px; opacity: 1; }
.arrow { border: 4px solid transparent; border-top-color: #000; border-bottom: 0; }
.swatch { width: 8px; height: 8px; border: 1px solid #000; background: #ff0; }
.rule { width: 35px; height: 1px; background: #000; }
.rule.long { width: 60px; }
.c1 { width: 173px; margin-left: 2px; }
.c2 { width: 298px; margin-left: 2px; padding-left: 3px; }
.c2 .swatch { margin-left: 3px; }
.c3 { width: 149px; margin-left: 2px; }
.c4 { width: 160px; }
.c5 { width: 124px; }
.c6 { width: 120px; }
.disabled { background: #f0f0f0; border-color: #b5b5b5; color: #888; }
.disabled .arrow { border-top-color: #aaa; }

main { flex: 1; display: flex; min-height: 0; }
.dock { display: flex; width: 52px; gap: 1px; flex: none; }
.col { width: 25px; }
.vbar { display: flex; flex-direction: column; align-items: center; border-right: 1px solid #a0a0a0; border-bottom: 1px solid #a0a0a0; border-top: 1px solid #fff; padding-bottom: 4px; }
.hgrip { width: 20px; height: 3px; border: 1px solid #a5a5a5; border-width: 1px 0; margin: 3px 0; }
.hsep { width: 19px; height: 1px; background: #a0a0a0; margin: 3px 0 2px; }
.vtool { width: 24px; height: 22px; display: flex; align-items: center; justify-content: center; }

.doc { flex: 1; min-width: 0; display: flex; flex-direction: column; border-left: 2px solid #6e6e6e; border-top: 2px solid #6e6e6e; }
.view { flex: 1; display: flex; min-height: 0; }
.drawing { flex: 1; min-width: 0; height: auto; background: #000; overflow: hidden; }
.note { font: italic 14px "Liberation Sans", sans-serif; fill: #f0f; white-space: pre; }
.level { font: 10px "Liberation Sans", sans-serif; fill: #f0f; }
.dim { font: 9px "Liberation Sans", sans-serif; fill: #ff0; }

.vscroll { width: 16px; display: flex; flex-direction: column; background: #ececec; border-left: 1px solid #fff; border-right: 2px solid #e0e0e0; }
.vscroll button { height: 17px; display: flex; align-items: center; justify-content: center; }
.track { flex: 1; display: flex; flex-direction: column; }
.track::before { content: ""; flex: 476; }
.track::after { content: ""; flex: 198; }
.thumb { width: 13px; height: 13px; border: 1px solid #8e8e8e; border-radius: 2px; background: linear-gradient(90deg, #f4f4f4, #d0d0d4); }

.tabs { height: 16px; display: flex; align-items: stretch; flex: none; font-size: 11px; }
.nav { width: 15px; display: flex; align-items: center; justify-content: center; box-sizing: border-box; border-right: 1px solid #999; border-bottom: 1px solid #999; }
.tab { padding: 0 12px; height: 16px; background: #555; clip-path: polygon(0 0, 100% 0, calc(100% - 6px) 100%, 6px 100%); margin-right: -8px; position: relative; line-height: 15px; color: #000; }
.tab span { position: relative; }
.tab::before { content: ""; position: absolute; inset: 0 1px 1px 1px; background: #f4f4f4; clip-path: polygon(0 0, 100% 0, calc(100% - 6px) 100%, 6px 100%); }
.tab.on { color: #fff; z-index: 1; }
.tab.on::before { background: #000; }
.hscroll { margin-left: auto; width: 549px; display: flex; align-items: center; padding-right: 19px; box-sizing: border-box; background: #ececec; }
.hscroll button { width: 17px; display: flex; justify-content: center; }
.split { width: 3px; height: 12px; border: 1px solid #999; border-radius: 2px; }
.htrack { flex: 1; display: flex; }
.htrack::before { content: ""; flex: 221; }
.htrack::after { content: ""; flex: 256; }

footer { height: 19px; flex: none; box-sizing: border-box; border-top: 3px solid #fff; display: flex; flex-direction: column; }
footer::before { content: ""; margin-top: 3px; height: 2px; background: #777; }
footer i { margin: 9px 14px 0 17px; height: 2px; background: #777; }

.aerial { position: absolute; top: -3px; right: 36px; width: 347px; height: 221px; box-sizing: border-box; background: #d6e3f1; border: 1px solid #5c6670; border-top: 0; padding: 0 8px 8px 8px; }
.inner { height: 100%; display: flex; flex-direction: column; background: #fff; }
.amenu { height: 8px; flex: none; overflow: hidden; display: flex; align-items: flex-end; background: #dde3f3; color: #777; font-size: 12px; padding-left: 7px; gap: 15px; }
.amenu button { line-height: 14px; }
.ghost { flex: none; overflow: hidden; display: flex; color: #777; }
.ghost span { flex: none; white-space: nowrap; }
.ghost.top { height: 5px; padding-top: 3px; line-height: 2px; }
.ghost.top span { width: 253px; }
.ghost.top b { width: 10px; height: 3px; background: #7f8fae; margin-right: 13px; }
.atools { height: 20px; flex: none; display: flex; align-items: center; gap: 7px; padding-left: 9px; background: #f0f0f0; margin-right: 5px; }
.atools i { width: 1px; height: 5px; background: #8cc820; margin-left: 17px; }
.ghost.low { height: 5px; color: #222; align-items: flex-end; line-height: 10px; padding-left: 29px; border-bottom: 1px solid #888; }
.w1 { width: 149px; }
.w2 { width: 131px; color: #555; }
.overview { width: 100%; flex: 1; background: #000; overflow: hidden; }
</style>
